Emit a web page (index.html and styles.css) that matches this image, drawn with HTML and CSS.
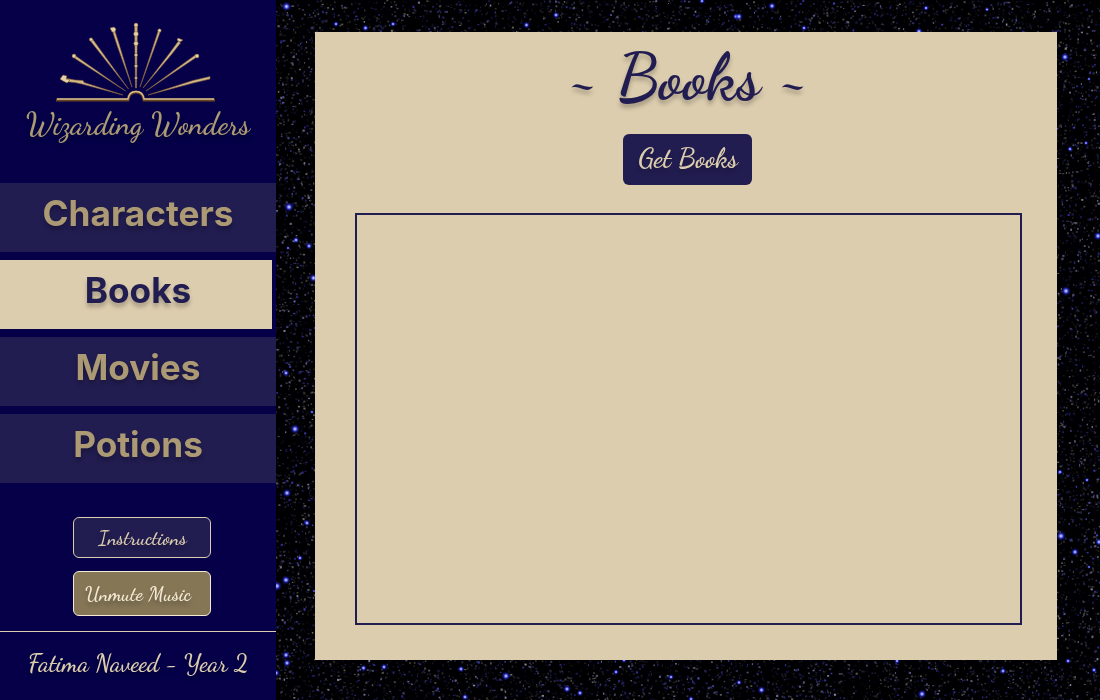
FILE: index.html
```html
<!DOCTYPE html>
<html lang="en">
<head>
<meta charset="utf-8">
<title>Wizarding Wonders</title>
<link rel="stylesheet" href="styles.css">
</head>
<body>
<canvas class="sky" width="1100" height="700"></canvas>
<div class="app">
  <aside class="sidebar">
    <header class="brand">
      <svg class="logo" viewBox="54 20 164 84" width="164" height="84" fill="none">
        <path d="M56 100H128Q129 92 136 92Q143 92 144 100H215" stroke="#6b4426" stroke-width="2.800"/>
        <path d="M57 99H128Q129 91.500 136 91.500Q143 91.500 144 99H214" stroke="#d8c291" stroke-width="1.300"/>
        <g fill="#d2b988" stroke="#86603b" stroke-width=".6">
          <path d="M135.500 88L134.600 25L137.400 25L136.500 88Z"/><path d="M132 87L117 45L112.500 31L114.500 30L119 44Z"/><path d="M128.500 89L90.500 41L92.500 39Z"/><path d="M125.500 91L73.500 57.500L75 55.500Z"/><path d="M123 95L82 84L75 82.500L65 81.500L64 78L75 80L83 80.500L84 82.500Z"/>
          <path d="M140 87L158.500 30L160.500 31Z"/><path d="M143 88L169 54L178.500 41L180.500 43L171 55Z"/><path d="M146 91L196 54.500L197.500 56.500Z"/><path d="M148 95L193 80.500L210 76.500L210 79L193 83Z"/>
        </g>
        <g fill="#e6d2a6" stroke="#73502f" stroke-width=".5">
          <circle cx="136" cy="25" r="2"/><circle cx="136" cy="34" r="2.400"/><circle cx="136" cy="43.500" r="2.200"/><circle cx="136" cy="55" r="1.600"/><circle cx="136" cy="66" r="1.500"/><circle cx="136" cy="78" r="1.300"/><path d="M110 28L114 27L116 29L115 32L112 32Z"/><circle cx="91" cy="39.500" r="1.700"/><circle cx="74" cy="56" r="2"/><circle cx="159.500" cy="30.500" r="1.700"/><circle cx="197" cy="56" r="2"/>
          <path d="M60 79L63 75L67 76L66 79L70 80L67 83L63 81Z"/><path d="M177 40L178 38L183 40L180 42Z"/>
        </g>
      </svg>
      <div class="script brand-name"><span>Wizarding Wonders</span></div>
    </header>
    <nav class="menu">
      <a class="item">Characters</a>
      <a class="item active">Books</a>
      <a class="item">Movies</a>
      <a class="item">Potions</a>
    </nav>
    <div class="actions">
      <button class="script instructions"><span>Instructions</span></button>
      <button class="script music"><span>Unmute Music</span></button>
    </div>
    <footer class="script credit"><span>Fatima Naveed - Year 2</span></footer>
  </aside>
  <main class="page">
    <h1 class="script title"><span>~ Books ~</span></h1>
    <button class="script fetch"><span>Get Books</span></button>
    <section class="results"></section>
  </main>
</div>
<script src="sky.js"></script>
</body>
</html>
```
FILE: styles.css
```css
* { box-sizing: border-box; }
body { margin: 0; width: 1100px; height: 700px; overflow: hidden; background: #000; font-family: Inter, sans-serif; }
.sky { position: fixed; inset: 0; z-index: -1; }
.app { display: flex; height: 700px; }
.sidebar { width: 276px; height: 700px; background: #050048; display: flex; flex-direction: column; }
.script { font-family: "Dancing Script", cursive; font-weight: 700; text-shadow: 0 4px 4px rgba(0,0,0,.25); white-space: nowrap; }
.script span { display: inline-block; }
.brand { height: 183px; padding-top: 20px; display: flex; flex-direction: column; align-items: center; }
.logo { display: block; margin-right: 4px; }
.brand-name { font-size: 30px; line-height: 41px; color: #ab9a73; font-weight: 600; letter-spacing: .1px; }
.menu { display: grid; gap: 8px; }
.item { height: 69px; background: #221d51; color: #ab9a73; font-size: 35.2px; font-weight: 700; line-height: 61px; text-align: center; text-shadow: 0 4px 4px rgba(0,0,0,.25); }
.item.active { background: #dccdae; color: #221d51; width: 272px; padding-left: 4px; }
.actions { padding: 34px 0 0 73px; display: grid; gap: 13px; height: 148px; align-content: start; }
.actions button { width: 138px; border: 1px solid #dccdae; border-radius: 6px; padding: 0; font-weight: 600; }
.instructions { height: 41px; background: #221d51; color: #dccdae; font-size: 20px; padding-left: 1px !important; }
.music { height: 45px; background: #857656; color: #f4ead2; font-size: 20px; padding-right: 8px !important; border-color: #f4ead2 !important; }
.credit { flex: 1; border-top: 1px solid #dccdae; color: #dccdae; font-size: 24px; line-height: 64px; text-align: center; font-weight: 600; letter-spacing: .08px; }
.page { width: 742px; height: 628px; margin: 32px 0 0 39px; padding: 0 35px 35px 40px; background: #dccdae; display: flex; flex-direction: column; align-items: center; }
.title { height: 102px; margin: 0; font-size: 65px; line-height: 90px; color: #221d51; word-spacing: 1px; }
.fetch { width: 129px; height: 51px; margin-right: 2px; border: 0; border-radius: 6px; background: #221d51; color: #dccdae; font-size: 27px; line-height: 49px; padding: 0 0 2px 1px; }
.results { width: 667px; height: 412px; margin-top: 28px; border: 2px solid #221d51; }
```
FILE: sky.js
```js
const ctx = document.querySelector('.sky').getContext('2d');
let seed = 71;
const rnd = () => (seed = (seed * 16807) % 2147483647) / 2147483647;
ctx.fillStyle = '#000002';
ctx.fillRect(0, 0, 1100, 700);
const tints = ['110,110,160', '70,70,200', '150,150,180', '60,55,180', '140,135,125'];
for (let i = 0; i < 48000; i++) {
  ctx.fillStyle = `rgba(${tints[Math.floor(rnd() * 5)]},${(0.08 + 0.9 * rnd() * rnd()).toFixed(2)})`;
  ctx.fillRect(rnd() * 1100, rnd() * 700, 1 + rnd() * 1.3, 1 + rnd() * 1.3);
}
const stars = [[286.5,6.5,5],[336,24,3],[365.5,28,3.5],[393,24,3],[289,207,5],[296,240,3.5],[309,246,3.5],[288,248,2],[313.5,278,4.5],[286,373,3.5],[295,429,5],[312,412,2],[287,493,4.5],[307,523,3.5],[300,558,3],[286,580,4.5],[277,586,5],[1065,57,4.5],[1089,79,2],[1070,149,3],[1086,143,2.5],[1098,236,4.5],[1066,291,5],[1060,472,3],[1087,480,2.5],[1061,536,5],[1075,552,4],[1099,542,4],[1089,567,2],[1068,661,3],[1094,670,3],[286,655,4],[287,663,4],[276,673,4],[363.5,668,3.5],[384,667,3.5],[461,669,3.5],[506,676,4.5],[465,697,3.5],[567,689,4],[580,693,3.5],[616,672,3],[671,677,3],[624,660,3],[772,6,4],[736,16.5,3.5],[739,16.5,4],[556,15,3.5],[526.5,25,3.5],[926,8,3],[987,9.5,2.5],[702,1,3],[804,28,3],[919,31.5,4],[897,661,3],[1003,671,3.5],[761.5,690,4],[739,682.5,3],[922,694,4.5],[691,699,3]];
for (const [x, y, r] of stars) {
  const g = ctx.createRadialGradient(x, y, 0, x, y, r);
  g.addColorStop(0, '#d8e4ff');
  g.addColorStop(0.25, '#7c8cff');
  g.addColorStop(0.55, 'rgba(35,35,190,.75)');
  g.addColorStop(1, 'rgba(10,10,110,0)');
  ctx.fillStyle = g;
  ctx.fillRect(x - r, y - r, r * 2, r * 2);
}
```
